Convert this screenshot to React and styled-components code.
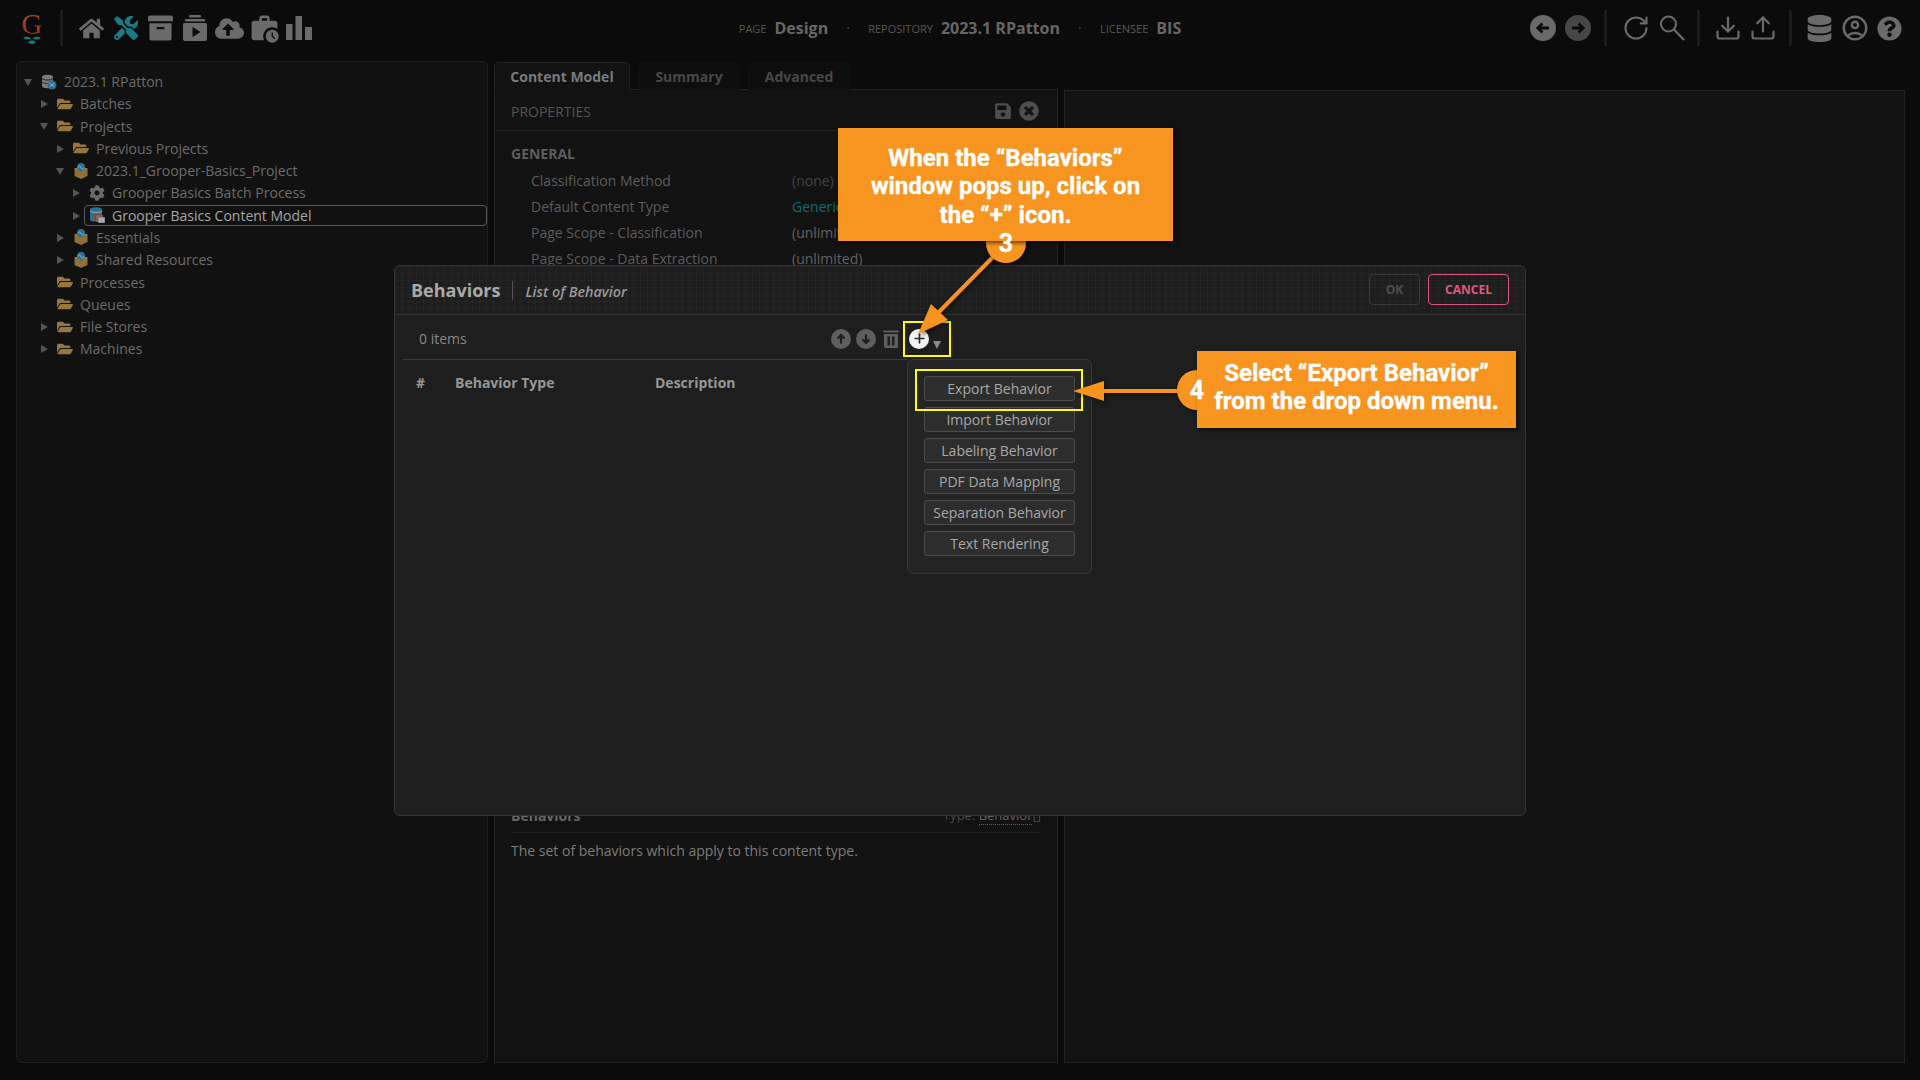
import React from "react";
import styled, { createGlobalStyle } from "styled-components";
import { FaHome, FaTools, FaCloudUploadAlt, FaFolderOpen, FaCog, FaSave, FaDatabase, FaQuestionCircle, FaTimesCircle } from "react-icons/fa";
import { MdOutlineAccountCircle, MdWorkHistory } from "react-icons/md";
import { RotateCw, Download, Upload, Plus } from "lucide-react";

const Global = createGlobalStyle`
  html, body { margin: 0; padding: 0; background: #0b0b0b; }
  * { box-sizing: border-box; }
  body { font-family: "Open Sans", "Noto Sans", sans-serif; }
`;

const Page = styled.div`
  position: relative;
  width: 1920px;
  height: 1080px;
  overflow: hidden;
  display: flex;
  flex-direction: column;
  background: #0b0b0b;
  color: #6e6e6e;
`;

const TopBar = styled.header`
  height: 56px;
  flex: none;
  display: grid;
  grid-template-columns: 1fr auto 1fr;
  align-items: center;
`;

const TopLeft = styled.div`
  display: flex;
  align-items: center;
  padding-left: 20px;
`;

const TopRight = styled.div`
  display: flex;
  align-items: center;
  justify-content: flex-end;
  padding-right: 18px;
`;

const LogoBox = styled.div`
  width: 24px;
  height: 32px;
  display: flex;
  flex-direction: column;
  align-items: center;
`;

const LogoG = styled.span`
  font-family: "Liberation Serif", serif;
  font-size: 29px;
  line-height: 24px;
  height: 24px;
  background: linear-gradient(180deg, #a8501c, #a33a22 60%, #8a3325);
  -webkit-background-clip: text;
  background-clip: text;
  color: transparent;
`;

const VSep = styled.div`
  width: 3px;
  height: 36px;
  background: #1c1c1c;
  margin: ${(p) => p.$m};
`;

const NavSlot = styled.span`
  width: 34.67px;
  display: flex;
  justify-content: center;
  color: ${(p) => p.$c || "#6a6a6a"};
`;

const IconGroup = styled.div`
  display: flex;
  align-items: center;
  gap: ${(p) => p.$gap};
  color: #6a6a6a;
`;

const Crumbs = styled.div`
  display: flex;
  align-items: center;
`;

const CrumbLabel = styled.span`
  font-size: 11px;
  color: #575757;
  margin-right: 8px;
  margin-top: 1px;
`;

const CrumbValue = styled.span`
  font-size: 16px;
  font-weight: 700;
  color: #666;
`;

const CrumbDot = styled.span`
  font-size: 12px;
  color: #555;
  width: 40px;
  text-align: center;
`;

const Body = styled.main`
  flex: 1;
  min-height: 0;
  display: flex;
  padding: 5px 15px 17px 16px;
`;

const TreePanel = styled.section`
  width: 472px;
  flex: none;
  background: #111;
  border: 1px solid #1f1f1f;
  border-radius: 6px;
  padding-top: 8.5px;
  margin-right: 6px;
`;

const TreeRow = styled.div`
  height: 22.27px;
  display: flex;
  align-items: center;
  padding-left: ${(p) => 3 + p.$level * 16}px;
`;

const CaretBox = styled.span`
  width: 16px;
  flex: none;
  display: flex;
  justify-content: center;
`;

const CaretOpen = styled.span`
  width: 0;
  height: 0;
  margin-top: 1px;
  border-left: 4px solid transparent;
  border-right: 4px solid transparent;
  border-top: 7px solid #555;
`;

const CaretClosed = styled.span`
  width: 0;
  height: 0;
  margin-top: 1px;
  border-top: 4px solid transparent;
  border-bottom: 4px solid transparent;
  border-left: 7px solid #555;
`;

const TreeLabel = styled.div`
  flex: 1;
  height: 21px;
  display: flex;
  align-items: center;
  gap: 7px;
  padding-left: ${(p) => (p.$selected ? 4 : 5)}px;
  border: ${(p) => (p.$selected ? "1px solid #5a5a5a" : "none")};
  border-radius: 4px;
  font-size: 14px;
  color: ${(p) => (p.$selected ? "#a6a6a6" : "#6c6c6c")};
  white-space: nowrap;
`;

const Folder = styled(FaFolderOpen)`
  color: #96773d;
  flex: none;
`;

const Gear = styled(FaCog)`
  color: #6a6a6a;
  flex: none;
`;

const MiddleColumn = styled.section`
  width: 564px;
  flex: none;
  display: flex;
  flex-direction: column;
  padding-top: 1px;
  margin-right: 6px;
`;

const Tabs = styled.div`
  height: 28px;
  flex: none;
  display: flex;
  gap: 9px;
  position: relative;
  z-index: 1;
  margin-bottom: -1px;
`;

const Tab = styled.div`
  width: ${(p) => p.$w}px;
  height: 28px;
  display: flex;
  align-items: center;
  justify-content: center;
  font-size: 14px;
  font-weight: 700;
  border-radius: 5px 5px 0 0;
  background: ${(p) => (p.$active ? "#121212" : "#0e0e0e")};
  border: 1px solid ${(p) => (p.$active ? "#222" : "#111")};
  border-bottom: ${(p) => (p.$active ? "1px solid #121212" : "none")};
  color: ${(p) => (p.$active ? "#767b80" : "#474747")};
`;

const PropPanel = styled.div`
  flex: 1;
  min-height: 0;
  display: flex;
  flex-direction: column;
  background: #121212;
  border: 1px solid #222;
`;

const PropHead = styled.div`
  height: 41px;
  flex: none;
  display: flex;
  align-items: center;
  justify-content: space-between;
  padding: 2px 18px 0 16px;
  border-bottom: 1px solid #222;
  font-size: 14px;
  color: #555;
`;

const PropActions = styled.div`
  display: flex;
  align-items: center;
  gap: 7px;
  color: #4d4d4d;
`;

const PropBody = styled.div`
  flex: 1;
  padding: 13px 16px 0;
`;

const SectionTitle = styled.div`
  font-size: 14px;
  font-weight: 700;
  color: #5e5e5e;
  height: 20px;
  line-height: 20px;
  margin-bottom: 3.5px;
`;

const PropRow = styled.div`
  height: 26px;
  display: grid;
  grid-template-columns: 261px 1fr;
  align-items: center;
  padding-left: 20px;
  font-size: 14px;
  color: #5c5c5c;
`;

const PropValue = styled.span`
  color: ${(p) => p.$c || "#626262"};
`;

const HelpBlock = styled.div`
  height: 258px;
  flex: none;
  margin: 0 16px;
`;

const HelpHead = styled.div`
  height: 29px;
  display: flex;
  justify-content: space-between;
  align-items: center;
  padding-bottom: 6px;
  border-bottom: 1px solid #222;
  font-size: 13px;
  color: #4f4f4f;
`;

const HelpName = styled.span`
  font-size: 14px;
  font-weight: 700;
  color: #666;
`;

const HelpType = styled.span`
  color: #4a4a4a;
`;

const HelpLink = styled.span`
  color: #666;
  border-bottom: 1px dotted #666;
`;

const HelpText = styled.p`
  margin: 8px 0 0;
  font-size: 14px;
  line-height: 20px;
  color: #7c7c7c;
`;

const ViewPanel = styled.section`
  flex: 1;
  margin-top: 29px;
  background: #121212;
  border: 1px solid #222;
`;

const Modal = styled.div`
  position: absolute;
  left: 394px;
  top: 265px;
  width: 1132px;
  height: 551px;
  display: flex;
  flex-direction: column;
  background: #1e1e1e;
  border: 1px solid #363636;
  border-radius: 6px;
`;

const ModalHead = styled.div`
  height: 49px;
  flex: none;
  display: flex;
  align-items: center;
  padding: 0 16px 1px 16px;
  border-bottom: 1px solid #343434;
  border-radius: 6px 6px 0 0;
  background-color: #1e1e1e;
  background-image:
    linear-gradient(rgba(255, 255, 255, 0.025) 1px, transparent 1px),
    linear-gradient(90deg, rgba(255, 255, 255, 0.025) 1px, transparent 1px);
  background-size: 7px 7px;
`;

const ModalTitle = styled.span`
  font-size: 18px;
  font-weight: 700;
  color: #a9a9a9;
`;

const TitleSep = styled.span`
  width: 1px;
  height: 19px;
  background: #555;
  margin: 1px 12px 0 12px;
`;

const ModalSub = styled.span`
  font-size: 14.3px;
  font-weight: 600;
  font-style: italic;
  color: #9a9a9a;
  flex: 1;
  margin-top: 3px;
`;

const HeadButton = styled.div`
  height: 31px;
  width: ${(p) => p.$w}px;
  margin-left: ${(p) => p.$ml || 0}px;
  display: flex;
  align-items: center;
  justify-content: center;
  font-size: 12px;
  font-weight: 700;
  border-radius: 4px;
  border: 1px solid ${(p) => p.$c};
  color: ${(p) => p.$t};
`;

const ModalToolbar = styled.div`
  height: 45px;
  margin: 0 8px;
  flex: none;
  display: flex;
  align-items: center;
  padding: 2px 0 0 16px;
  background: linear-gradient(#3c3c3c, #3c3c3c) no-repeat left bottom / 504px 1px;
  font-size: 14px;
  color: #888;
`;

const ToolIcons = styled.div`
  margin-left: auto;
  margin-right: 576px;
  display: flex;
  align-items: center;
  color: #5f5f5f;
`;

const Down = styled.span`
  display: flex;
  margin-left: 5px;
`;

const TrashSlot = styled.span`
  display: flex;
  margin-left: 7px;
`;

const PlusButton = styled.span`
  width: 20px;
  height: 20px;
  margin-left: 10px;
  border-radius: 50%;
  background: #f2f2f2;
  color: #2a2a2a;
  display: flex;
  align-items: center;
  justify-content: center;
`;

const Tri = styled.span`
  width: 0;
  height: 0;
  margin: 12px 0 0 4px;
  border-left: 4.5px solid transparent;
  border-right: 4.5px solid transparent;
  border-top: 8px solid #8a8a8a;
`;

const TableHead = styled.div`
  display: grid;
  grid-template-columns: 39px 200px 1fr;
  padding: 13px 0 0 21px;
  font-size: 14px;
  font-weight: 700;
  color: #979797;
`;

const Menu = styled.div`
  position: absolute;
  left: 512px;
  top: 93px;
  width: 185px;
  height: 215px;
  background: #242424;
  border: 1px solid #383838;
  border-radius: 6px;
  padding: 16px 16px 0;
  display: flex;
  flex-direction: column;
  gap: 6px;
`;

const MenuItem = styled.div`
  height: 25px;
  display: flex;
  align-items: center;
  justify-content: center;
  font-size: 14px;
  color: #a8a8a8;
  background: #2d2d2d;
  border: 1px solid #4c4c4c;
  border-radius: 3px;
  white-space: nowrap;
`;

const Highlight = styled.div`
  position: absolute;
  left: ${(p) => p.$x}px;
  top: ${(p) => p.$y}px;
  width: ${(p) => p.$w}px;
  height: ${(p) => p.$h}px;
  border: 2px solid #ffff00;
  pointer-events: none;
`;

const Callout = styled.div`
  position: absolute;
  left: ${(p) => p.$x}px;
  top: ${(p) => p.$y}px;
  width: ${(p) => p.$w}px;
  height: ${(p) => p.$h}px;
  padding: ${(p) => p.$pad};
  display: flex;
  align-items: center;
  justify-content: center;
  background: #f89520;
  color: #fff;
  font-family: Roboto, sans-serif;
  font-weight: 700;
  font-size: 24px;
  line-height: 28.4px;
  text-align: center;
  -webkit-text-stroke: 0.35px #fff;
  box-shadow: 2px 2px 4px rgba(0, 0, 0, 0.6);
`;

const StepDisc = styled.div`
  position: absolute;
  left: ${(p) => p.$x}px;
  top: ${(p) => p.$y}px;
  width: 40px;
  height: 40px;
  border-radius: 50%;
  background: #f89520;
  box-shadow: 2px 2px 4px rgba(0, 0, 0, 0.5);
`;

const StepNumber = styled.div`
  position: absolute;
  left: ${(p) => p.$x}px;
  top: ${(p) => p.$y}px;
  width: 40px;
  height: 40px;
  color: #fff;
  font-family: Roboto, sans-serif;
  font-weight: 700;
  font-size: 25px;
  -webkit-text-stroke: 0.35px #fff;
  display: flex;
  align-items: center;
  justify-content: center;
`;

const ArrowSvg = styled.svg`
  position: absolute;
  left: 0;
  top: 0;
  width: 1920px;
  height: 1080px;
  pointer-events: none;
  filter: drop-shadow(2px 2px 2px rgba(0, 0, 0, 0.5));
`;

const CircleSvg = styled.svg`
  display: block;
  transform: rotate(${(p) => p.$rot}deg);
  color: ${(p) => p.$c || "currentColor"};
`;

const CircleArrow = ({ size, rot, color, ink = "#161616" }) => (
  <CircleSvg width={size} height={size} viewBox="0 0 24 24" $rot={rot} $c={color}>
    <circle cx="12" cy="12" r="12" fill="currentColor" />
    <path d="M12 17.500V7.500M7.800 11.500 12 7.200l4.200 4.300" stroke={ink} strokeWidth="2.600" fill="none" />
  </CircleSvg>
);

const SearchGlyph = () => (
  <svg width="26" height="26" viewBox="0 0 26 26" fill="none" stroke="currentColor" strokeWidth="2">
    <circle cx="9.500" cy="9" r="7.500" />
    <path d="M15 14.500 25 25" strokeWidth="2.200" />
  </svg>
);

const Trash = () => (
  <svg width="16" height="18" viewBox="0 0 16 18" fill="currentColor">
    <rect x="0" y="0.500" width="16" height="2" rx="1" />
    <path d="M1 4h14v12.500a1.500 1.500 0 0 1-1.500 1.500h-11A1.500 1.500 0 0 1 1 16.500zM4.500 6.500v9H7v-9zM9 6.500v9h2.500v-9z" fillRule="evenodd" />
  </svg>
);

const BoxIcon = () => (
  <svg width="16" height="16" viewBox="0 0 16 16" style={{ flex: "none" }}>
    <path d="M1.500 6 8 8.500 14.500 6v7L8 16 1.500 13z" fill="#8f6f3a" />
    <path d="M1 5.500 3 7l5 1.500L13 7l2-1.500L13 5H3z" fill="#a5834a" />
    <circle cx="8" cy="4" r="4" fill="#2f6f95" />
    <path d="M5 4.500c1-2 2-2 3 0s2 2 3 0" stroke="#8fc0da" fill="none" strokeWidth="1" />
  </svg>
);

const RepoIcon = () => (
  <svg width="16" height="16" viewBox="0 0 16 16" style={{ flex: "none" }}>
    <path d="M1 3c0-3 11-3 11 0v9c0 3-11 3-11 0z" fill="#7b7b7b" />
    <path d="M1 4.500c2 2 9 2 11 0M1 8c2 2 9 2 11 0" stroke="#222" fill="none" />
    <circle cx="11" cy="11" r="4.500" fill="#2f6f95" />
    <path d="m8.500 9 5 4M8.500 13l5-4" stroke="#8fc0da" strokeWidth=".8" />
  </svg>
);

const ModelIcon = () => (
  <svg width="16" height="16" viewBox="0 0 16 16" style={{ flex: "none" }}>
    <path d="M1 2.500c0-3 12-3 12 0V13c0 2-12 2-12 0z" fill="#2f6f95" />
    <path d="M1 4c2 2 10 2 12 0" stroke="#9cc" fill="none" strokeWidth=".8" />
    <rect x="5" y="6.500" width="7" height="7" fill="#a04a30" />
    <rect x="7" y="8" width="7" height="7" fill="#7f7f7f" stroke="#333" strokeWidth=".5" />
    <rect x="9" y="10" width="7" height="6" fill="#aaa" stroke="#333" strokeWidth=".5" />
  </svg>
);

const PlayStack = () => (
  <svg width="26" height="26" viewBox="0 0 26 26" fill="currentColor">
    <rect x="7" y="0" width="12" height="2.500" rx="1" />
    <rect x="3" y="4" width="20" height="2.500" rx="1" />
    <path d="M2 8h22a1.500 1.500 0 0 1 1 1.500V24a2 2 0 0 1-2 2H3a2 2 0 0 1-2-2V9.500A1.500 1.500 0 0 1 2 8zm8.500 4v10l8-5z" fillRule="evenodd" />
  </svg>
);

const ArchiveBox = () => (
  <svg width="25" height="26" viewBox="0 0 26 26" fill="currentColor">
    <path d="M2 0h22a2 2 0 0 1 2 2v4H0V2a2 2 0 0 1 2-2z" />
    <path d="M1.500 8h23v16a2 2 0 0 1-2 2h-19a2 2 0 0 1-2-2zM9 12v2.200h8V12z" fillRule="evenodd" />
  </svg>
);

const Bars = () => (
  <svg width="26" height="24" viewBox="0 0 26 24" fill="currentColor">
    <rect x="0" y="8" width="6.500" height="16" />
    <rect x="9.500" y="0" width="6.500" height="24" />
    <rect x="19" y="11" width="7" height="13" />
  </svg>
);

const LogoLeaves = () => (
  <svg width="22" height="10" viewBox="0 0 22 10">
    <path d="M0 2.500c3-2 7-2 10 .5-3 2-7 2-10-.5zM22 2.500c-3-2-7-2-10 .5 3 2 7 2 10-.5zM6 7.500c2-2 3-2 5-2 2 0 3 0 5 2-2 2-3 2.500-5 2.500s-3-.5-5-2.500z" fill="#147a78" />
  </svg>
);

const tree = [
  { l: 0, c: "open", icon: <RepoIcon />, t: "2023.1 RPatton" },
  { l: 1, c: "closed", icon: <Folder size={16} />, t: "Batches" },
  { l: 1, c: "open", icon: <Folder size={16} />, t: "Projects" },
  { l: 2, c: "closed", icon: <Folder size={16} />, t: "Previous Projects" },
  { l: 2, c: "open", icon: <BoxIcon />, t: "2023.1_Grooper-Basics_Project" },
  { l: 3, c: "closed", icon: <Gear size={16} />, t: "Grooper Basics Batch Process" },
  { l: 3, c: "closed", icon: <ModelIcon />, t: "Grooper Basics Content Model", sel: true },
  { l: 2, c: "closed", icon: <BoxIcon />, t: "Essentials" },
  { l: 2, c: "closed", icon: <BoxIcon />, t: "Shared Resources" },
  { l: 1, c: "", icon: <Folder size={16} />, t: "Processes" },
  { l: 1, c: "", icon: <Folder size={16} />, t: "Queues" },
  { l: 1, c: "closed", icon: <Folder size={16} />, t: "File Stores" },
  { l: 1, c: "closed", icon: <Folder size={16} />, t: "Machines" },
];

const props = [
  ["Classification Method", "(none)", "#444"],
  ["Default Content Type", "Generic", "#0f6e70"],
  ["Page Scope - Classification", "(unlimited)"],
  ["Page Scope - Data Extraction", "(unlimited)"],
];

const menu = ["Export Behavior", "Import Behavior", "Labeling Behavior", "PDF Data Mapping", "Separation Behavior", "Text Rendering"];

export default function App() {
  return (
    <Page>
      <Global />
      <TopBar>
        <TopLeft>
          <LogoBox>
            <LogoG>G</LogoG>
            <LogoLeaves />
          </LogoBox>
          <VSep $m="0 10.700px 0 16px" />
          <NavSlot><FaHome size={25} /></NavSlot>
          <NavSlot $c="#1a7b87"><FaTools size={24} /></NavSlot>
          <NavSlot><ArchiveBox /></NavSlot>
          <NavSlot><PlayStack /></NavSlot>
          <NavSlot><FaCloudUploadAlt size={29} /></NavSlot>
          <NavSlot><MdWorkHistory size={31} /></NavSlot>
          <NavSlot><Bars /></NavSlot>
        </TopLeft>
        <Crumbs>
          <CrumbLabel>PAGE</CrumbLabel>
          <CrumbValue>Design</CrumbValue>
          <CrumbDot>·</CrumbDot>
          <CrumbLabel>REPOSITORY</CrumbLabel>
          <CrumbValue>2023.1 RPatton</CrumbValue>
          <CrumbDot>·</CrumbDot>
          <CrumbLabel>LICENSEE</CrumbLabel>
          <CrumbValue>BIS</CrumbValue>
        </Crumbs>
        <TopRight>
          <IconGroup $gap="9px">
            <CircleArrow size={26} rot={-90} ink="#0b0b0b" />
            <CircleArrow size={26} rot={90} color="#474747" ink="#0b0b0b" />
          </IconGroup>
          <VSep $m="0 15px 0 13px" />
          <IconGroup $gap="9px">
            <RotateCw size={28} strokeWidth={1.8} />
            <SearchGlyph />
          </IconGroup>
          <VSep $m="0 14.500px 0 12px" />
          <IconGroup $gap="6.500px">
            <Download size={28} strokeWidth={1.9} />
            <Upload size={28} strokeWidth={1.9} />
          </IconGroup>
          <VSep $m="0 14.500px 0 12px" />
          <IconGroup $gap="7px">
            <FaDatabase size={27} />
            <MdOutlineAccountCircle size={30} />
            <FaQuestionCircle size={25} />
          </IconGroup>
        </TopRight>
      </TopBar>

      <Body>
        <TreePanel>
          {tree.map((n) => (
            <TreeRow key={n.t} $level={n.l}>
              <CaretBox>
                {n.c === "open" && <CaretOpen />}
                {n.c === "closed" && <CaretClosed />}
              </CaretBox>
              <TreeLabel $selected={n.sel}>
                {n.icon}
                <span>{n.t}</span>
              </TreeLabel>
            </TreeRow>
          ))}
        </TreePanel>

        <MiddleColumn>
          <Tabs>
            <Tab $active $w={136}>Content Model</Tab>
            <Tab $w={100}>Summary</Tab>
            <Tab $w={102}>Advanced</Tab>
          </Tabs>
          <PropPanel>
            <PropHead>
              <span>PROPERTIES</span>
              <PropActions>
                <FaSave size={18} />
                <FaTimesCircle size={20} />
              </PropActions>
            </PropHead>
            <PropBody>
              <SectionTitle>GENERAL</SectionTitle>
              {props.map(([k, v, c]) => (
                <PropRow key={k}>
                  <span>{k}</span>
                  <PropValue $c={c}>{v}</PropValue>
                </PropRow>
              ))}
            </PropBody>
            <HelpBlock>
              <HelpHead>
                <HelpName>Behaviors</HelpName>
                <HelpType>Type: <HelpLink>Behavior</HelpLink>[]</HelpType>
              </HelpHead>
              <HelpText>The set of behaviors which apply to this content type.</HelpText>
            </HelpBlock>
          </PropPanel>
        </MiddleColumn>

        <ViewPanel />
      </Body>

      <Modal>
        <ModalHead>
          <ModalTitle>Behaviors</ModalTitle>
          <TitleSep />
          <ModalSub>List of Behavior</ModalSub>
          <HeadButton $w={51} $c="#3a3a3a" $t="#4e4e4e">OK</HeadButton>
          <HeadButton $w={81} $ml={8} $c="#e0577c" $t="#e0577c">CANCEL</HeadButton>
        </ModalHead>
        <ModalToolbar>
          0 items
          <ToolIcons>
            <CircleArrow size={20} rot={0} ink="#1e1e1e" />
            <Down><CircleArrow size={20} rot={180} ink="#1e1e1e" /></Down>
            <TrashSlot><Trash /></TrashSlot>
            <PlusButton><Plus size={15} strokeWidth={2.6} /></PlusButton>
            <Tri />
          </ToolIcons>
        </ModalToolbar>
        <TableHead>
          <span>#</span>
          <span>Behavior Type</span>
          <span>Description</span>
        </TableHead>
        <Menu>
          {menu.map((m) => <MenuItem key={m}>{m}</MenuItem>)}
        </Menu>
      </Modal>

      <Highlight $x={903} $y={321} $w={48} $h={36} />
      <Highlight $x={915} $y={369} $w={168} $h={42} />

      <ArrowSvg viewBox="0 0 1920 1080">
        <path d="M993 257 937 314" stroke="#f8931f" strokeWidth="4" />
        <path d="M918 334 931 304 948 320z" fill="#f8931f" />
        <path d="M1180 391H1100" stroke="#f8931f" strokeWidth="4" />
        <path d="M1073 391 1104 381V401z" fill="#f8931f" />
      </ArrowSvg>

      <StepDisc $x={986} $y={223} />
      <Callout $x={838} $y={128} $w={335} $h={113} $pad="4px 0 0">
        <span>When the “Behaviors”<br />window pops up, click on<br />the “+” icon.</span>
      </Callout>
      <StepNumber $x={986} $y={223}>3</StepNumber>

      <StepDisc $x={1177} $y={370} />
      <Callout $x={1197} $y={351} $w={319} $h={77} $pad="0 0 5px">
        <span>Select “Export Behavior”<br />from the drop down menu.</span>
      </Callout>
      <StepNumber $x={1177} $y={370}>4</StepNumber>
    </Page>
  );
}
